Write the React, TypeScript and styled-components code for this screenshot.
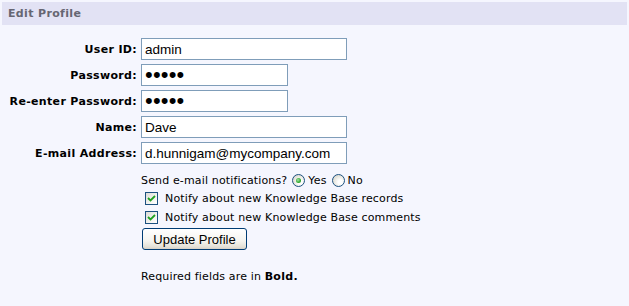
import React from 'react';
import styled, { createGlobalStyle } from 'styled-components';

const GlobalStyle = createGlobalStyle`
  html, body {
    margin: 0;
    padding: 0;
    background: #f5f6fe;
  }
  body {
    font-family: "DejaVu Sans", Verdana, sans-serif;
    font-size: 11px;
    letter-spacing: 0.15px;
    color: #000;
  }
  b {
    letter-spacing: 0.3px;
  }
`;

const Panel = styled.main`
  width: 629px;
  height: 306px;
  padding: 2px;
  box-sizing: border-box;
  background: #f5f6fe;
`;

const Header = styled.h2`
  margin: 0;
  height: 23px;
  padding-left: 6px;
  background: #e2e2f4;
  color: #666672;
  font-size: 11px;
  font-weight: bold;
  letter-spacing: 0.35px;
  line-height: 23px;
`;

const FieldGrid = styled.div`
  display: grid;
  grid-template-columns: 135px auto;
  column-gap: 4px;
  row-gap: 4px;
  align-items: center;
  justify-items: start;
  margin-top: 13px;
`;

const Label = styled.label`
  justify-self: end;
  font-weight: bold;
  letter-spacing: 0.33px;
  white-space: nowrap;
`;

const TextInput = styled.input<{ $width: number }>`
  box-sizing: border-box;
  width: ${(p) => p.$width}px;
  height: 22px;
  margin: 0;
  padding: 0 3px;
  border: 1px solid #7f9db9;
  background: #fff;
  color: #000;
  font-family: "Liberation Sans", Arial, sans-serif;
  font-size: 13.5px;
  letter-spacing: 0;
  outline: none;
`;

const PasswordInput = styled(TextInput)`
  font-size: 22px;
  letter-spacing: 0.2px;
  line-height: 20px;
`;

const Options = styled.div`
  margin-left: 139px;
`;

const NotifyLine = styled.div`
  display: flex;
  align-items: center;
  height: 18px;
  margin-top: 7px;
  white-space: nowrap;
`;

const RadioOption = styled.label`
  display: inline-flex;
  align-items: center;
  gap: 3px;
  margin-left: 5px;
`;

const RadioCircle = styled.span<{ $checked?: boolean }>`
  position: relative;
  display: inline-block;
  box-sizing: border-box;
  width: 13px;
  height: 13px;
  border: 1px solid #1c5180;
  border-radius: 50%;
  background: radial-gradient(circle at 65% 65%, #ffffff 20%, #e6e5dd 60%, #cfcdc3 100%);

  &::after {
    content: '';
    display: ${(p) => (p.$checked ? 'block' : 'none')};
    position: absolute;
    left: 3px;
    top: 3px;
    width: 5px;
    height: 5px;
    border-radius: 50%;
    background: radial-gradient(circle at 40% 40%, #a6e4a6 0%, #2fa82f 60%, #1a8a1a 100%);
  }
`;

const CheckRow = styled.label`
  display: flex;
  align-items: center;
  gap: 7px;
  height: 18px;
  padding-left: 4px;
  white-space: nowrap;

  & + & {
    margin-top: 1px;
  }
`;

const CheckBox = styled.span`
  display: inline-flex;
  align-items: center;
  justify-content: center;
  box-sizing: border-box;
  width: 13px;
  height: 13px;
  border: 1px solid #1c5180;
  background: linear-gradient(135deg, #dcdcd7 0%, #f4f4f0 60%, #ffffff 100%);
`;

const UpdateButton = styled.button`
  display: block;
  box-sizing: border-box;
  width: 105px;
  height: 22px;
  margin: 2px 0 0 1px;
  padding: 0;
  border: 1px solid #003c74;
  border-radius: 3px;
  background: linear-gradient(to bottom, #ffffff 0%, #f5f4ef 60%, #e3e0d6 90%, #d6d0c5 100%);
  color: #000;
  font-family: "Liberation Sans", Arial, sans-serif;
  font-size: 13px;
  letter-spacing: 0;
  cursor: pointer;
`;

const Note = styled.p`
  margin: 18px 0 0;
  line-height: 18px;
`;

const fields = [
  { id: 'userid', label: 'User ID:', value: 'admin', width: 206, secret: false },
  { id: 'password', label: 'Password:', value: 'admin', width: 147, secret: true },
  { id: 'password2', label: 'Re-enter Password:', value: 'admin', width: 147, secret: true },
  { id: 'name', label: 'Name:', value: 'Dave', width: 206, secret: false },
  { id: 'email', label: 'E-mail Address:', value: 'd.hunnigam@mycompany.com', width: 206, secret: false },
];

const Check = () => (
  <svg width="9" height="9" viewBox="0 0 9 9">
    <path d="M1 4 L3.5 6.5 L8 2" fill="none" stroke="#21a121" strokeWidth="1.8" />
  </svg>
);

const App: React.FC = () => {
  return (
    <Panel>
      <GlobalStyle />
      <Header>Edit Profile</Header>

      <FieldGrid>
        {fields.map((f) => (
          <React.Fragment key={f.id}>
            <Label htmlFor={f.id}>{f.label}</Label>
            {f.secret ? (
              <PasswordInput id={f.id} type="password" $width={f.width} defaultValue={f.value} />
            ) : (
              <TextInput id={f.id} type="text" $width={f.width} defaultValue={f.value} />
            )}
          </React.Fragment>
        ))}
      </FieldGrid>

      <Options>
        <NotifyLine>
          Send e-mail notifications?
          <RadioOption>
            <RadioCircle $checked />
            Yes
          </RadioOption>
          <RadioOption>
            <RadioCircle />
            No
          </RadioOption>
        </NotifyLine>
        <CheckRow>
          <CheckBox>
            <Check />
          </CheckBox>
          Notify about new Knowledge Base records
        </CheckRow>
        <CheckRow>
          <CheckBox>
            <Check />
          </CheckBox>
          Notify about new Knowledge Base comments
        </CheckRow>
        <UpdateButton type="button">Update Profile</UpdateButton>
        <Note>
          Required fields are in <b>Bold.</b>
        </Note>
      </Options>
    </Panel>
  );
};

export default App;
